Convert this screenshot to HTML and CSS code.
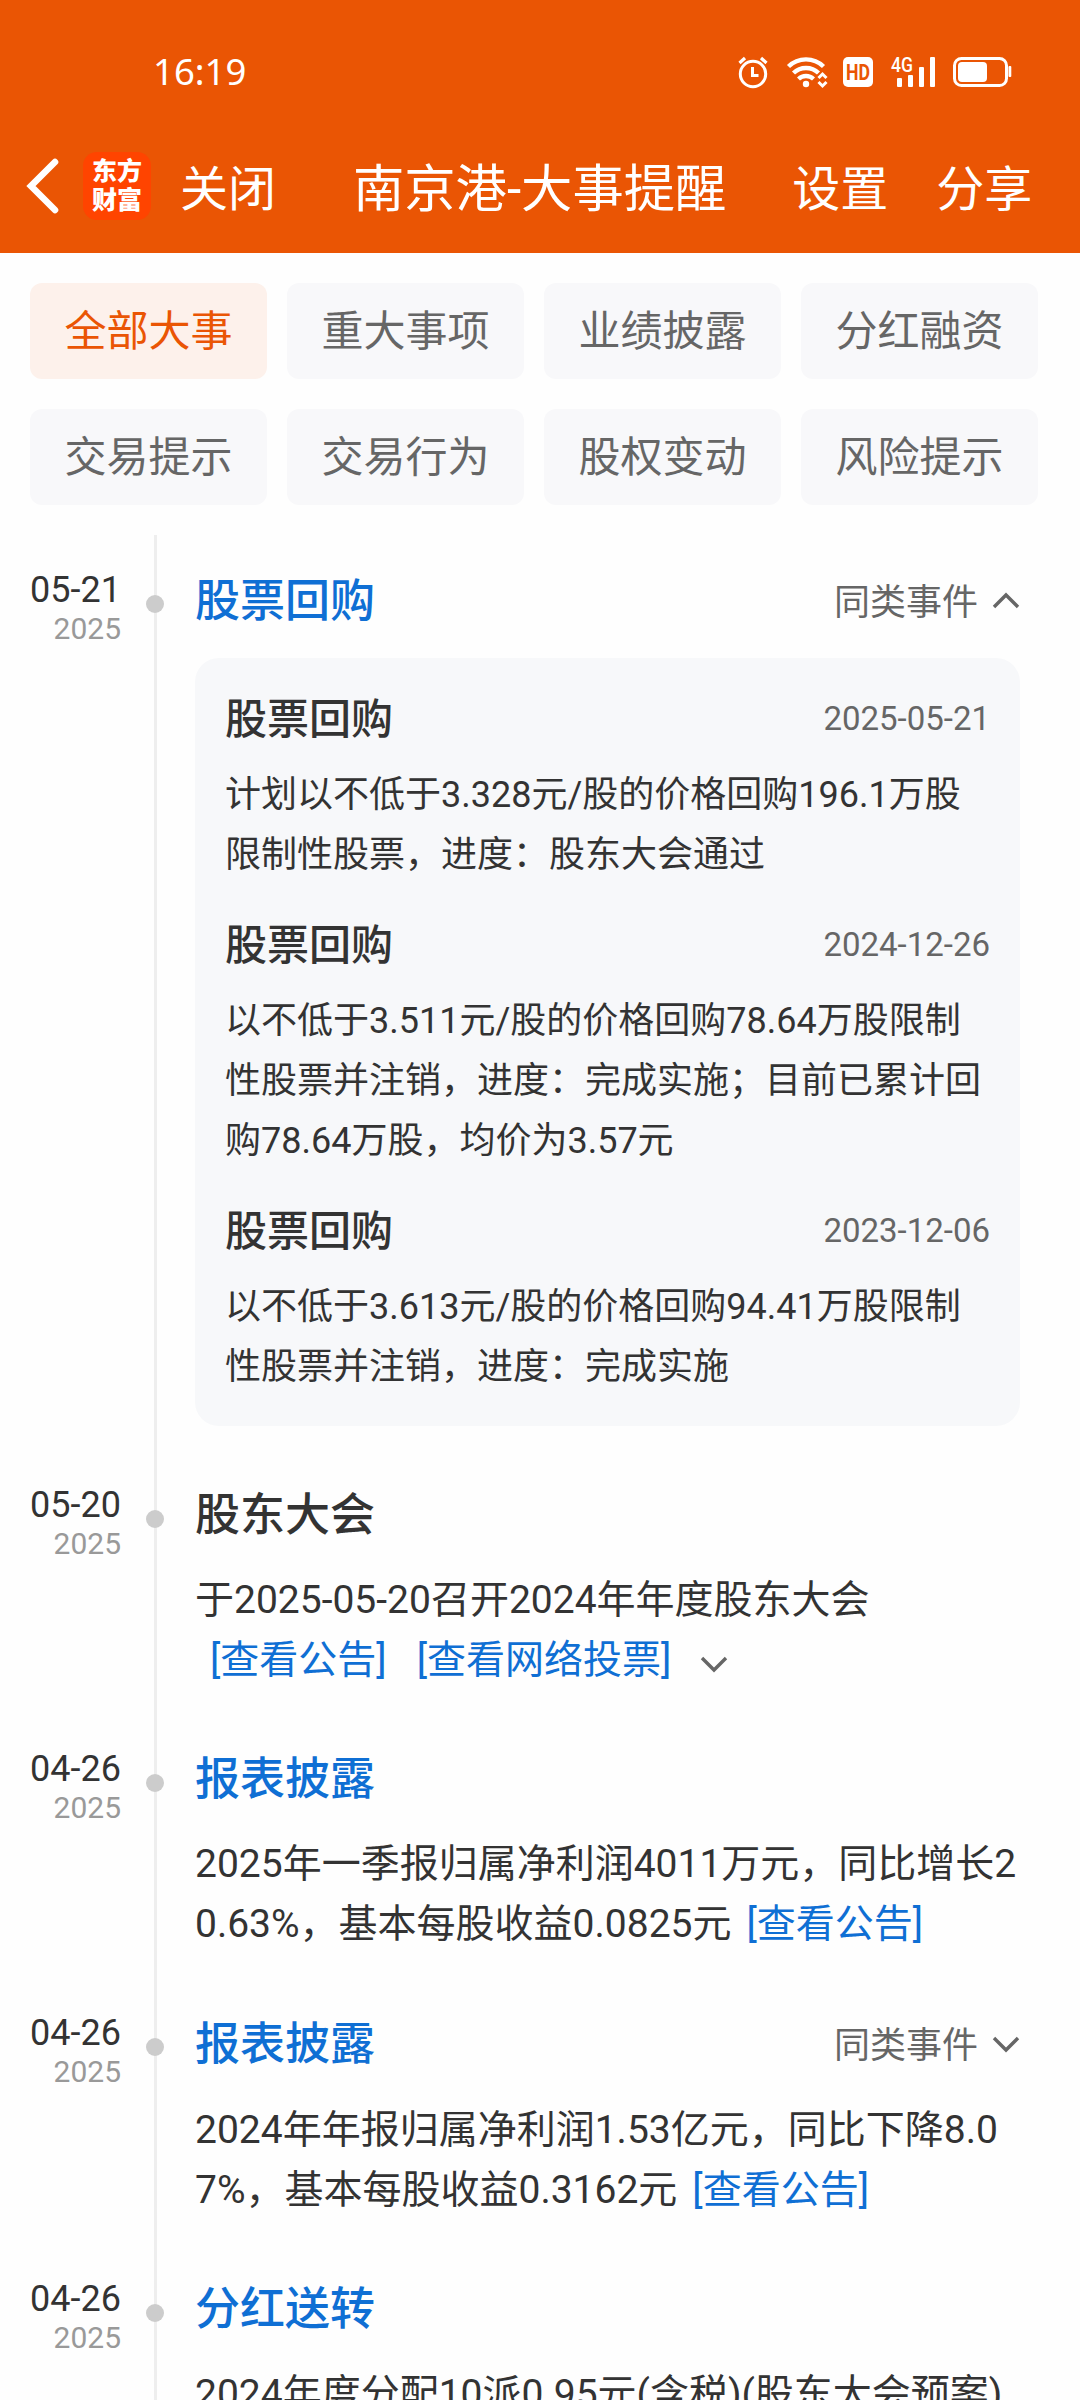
FILE: index.html
```html
<!DOCTYPE html>
<html lang="zh-CN">
<head>
    <meta charset="UTF-8">
    <meta name="viewport" content="width=device-width, initial-scale=1.0">
    <title>南京港-大事提醒</title>
    <link rel="stylesheet" href="styles.css">
</head>
<body>

    <header class="header">
        <div class="status-bar">
            <span class="time">16:19</span>
            <svg class="status-icons" width="280" height="40" viewBox="735 52 280 40" fill="none" stroke="#fff">
                <!-- 闹钟 -->
                <circle cx="753" cy="74" r="12.7" stroke-width="3"/>
                <path d="M752.5 67v8.5h6" stroke-width="3"/>
                <path d="M739.5 63l5.500-5M766.500 63l-5.500-5" stroke-width="3.2"/>
                <!-- WiFi -->
                <path d="M788.500 66.500a25 25 0 0 1 35 0" stroke-width="4.4"/>
                <path d="M793.500 73a18 18 0 0 1 25 0" stroke-width="4.4"/>
                <path d="M798.500 79a11 11 0 0 1 15 0" stroke-width="4.4"/>
                <circle cx="806" cy="84" r="3.2" fill="#fff" stroke="none"/>
                <path d="M818.500 78l4-4 4 4M818.500 82l4 4 4-4" stroke-width="3"/>
                <!-- HD -->
                <rect x="843" y="57" width="30" height="30" rx="5" fill="#fff" stroke="none"/>
                <text class="hd" x="846" y="80" textLength="24" lengthAdjust="spacingAndGlyphs">HD</text>
                <!-- 信号 -->
                <text class="net" x="891" y="72" textLength="22" lengthAdjust="spacingAndGlyphs">4G</text>
                <g fill="#fff" stroke="none">
                    <rect x="897" y="78" width="5" height="9" rx="1"/>
                    <rect x="908" y="75" width="5" height="12" rx="1"/>
                    <rect x="919" y="67" width="5" height="20" rx="1"/>
                    <rect x="930" y="57" width="5" height="30" rx="1"/>
                </g>
                <!-- 电池 -->
                <rect x="954.500" y="58.500" width="52" height="27" rx="7" stroke-width="3"/>
                <rect x="958" y="62" width="29" height="20" rx="4" fill="#fff" stroke="none"/>
                <rect x="1008.500" y="66" width="2.800" height="11" rx="1" fill="#fff" stroke="none"/>
            </svg>
        </div>
        <nav class="nav">
            <svg class="back" width="34" height="60" viewBox="0 0 34 60">
                <path d="M29 6L5 30l24 24" fill="none" stroke="#fff" stroke-width="6.6" stroke-linecap="round"/>
            </svg>
            <div class="logo"><span>东方</span><span>财富</span></div>
            <a class="nav-btn close">关闭</a>
            <h1>南京港-大事提醒</h1>
            <a class="nav-btn setting">设置</a>
            <a class="nav-btn">分享</a>
        </nav>
    </header>

    <div class="tabs">
        <div class="tab active">全部大事</div>
        <div class="tab">重大事项</div>
        <div class="tab">业绩披露</div>
        <div class="tab">分红融资</div>
        <div class="tab">交易提示</div>
        <div class="tab">交易行为</div>
        <div class="tab">股权变动</div>
        <div class="tab">风险提示</div>
    </div>

    <main class="timeline">
        <section class="event">
            <div class="date">
                <div class="day">05-21</div>
                <div class="year">2025</div>
            </div>
            <div class="axis"><i class="dot"></i></div>
            <div class="content">
                <div class="title-row has-same">
                    <h2 class="blue">股票回购</h2>
                    <span class="same">同类事件
                        <svg class="arrow" width="28" height="18" viewBox="0 0 28 18"><path d="M2 15L14 3l12 12"/></svg>
                    </span>
                </div>
                <div class="card">
                    <div class="item">
                        <div class="item-head"><h3>股票回购</h3><span>2025-05-21</span></div>
                        <p>计划以不低于3.328元/股的价格回购196.1万股限制性股票，进度：股东大会通过</p>
                    </div>
                    <div class="item">
                        <div class="item-head"><h3>股票回购</h3><span>2024-12-26</span></div>
                        <p>以不低于3.511元/股的价格回购78.64万股限制性股票并注销，进度：完成实施；目前已累计回购78.64万股，均价为3.57元</p>
                    </div>
                    <div class="item">
                        <div class="item-head"><h3>股票回购</h3><span>2023-12-06</span></div>
                        <p>以不低于3.613元/股的价格回购94.41万股限制性股票并注销，进度：完成实施</p>
                    </div>
                </div>
            </div>
        </section>

        <section class="event">
            <div class="date">
                <div class="day">05-20</div>
                <div class="year">2025</div>
            </div>
            <div class="axis"><i class="dot"></i></div>
            <div class="content">
                <div class="title-row"><h2>股东大会</h2></div>
                <p class="text">于2025-05-20召开2024年年度股东大会<br><a>[查看公告]</a><a>[查看网络投票]</a><svg class="arrow more" width="28" height="18" viewBox="0 0 28 18"><path d="M2 3l12 12L26 3"/></svg></p>
            </div>
        </section>

        <section class="event">
            <div class="date">
                <div class="day">04-26</div>
                <div class="year">2025</div>
            </div>
            <div class="axis"><i class="dot"></i></div>
            <div class="content">
                <div class="title-row"><h2 class="blue">报表披露</h2></div>
                <p class="text">2025年一季报归属净利润4011万元，同比增长20.63%，基本每股收益0.0825元<a>[查看公告]</a></p>
            </div>
        </section>

        <section class="event">
            <div class="date">
                <div class="day">04-26</div>
                <div class="year">2025</div>
            </div>
            <div class="axis"><i class="dot"></i></div>
            <div class="content">
                <div class="title-row has-same">
                    <h2 class="blue">报表披露</h2>
                    <span class="same">同类事件
                        <svg class="arrow" width="28" height="18" viewBox="0 0 28 18"><path d="M2 3l12 12L26 3"/></svg>
                    </span>
                </div>
                <p class="text">2024年年报归属净利润1.53亿元，同比下降8.07%，基本每股收益0.3162元<a>[查看公告]</a></p>
            </div>
        </section>

        <section class="event">
            <div class="date">
                <div class="day">04-26</div>
                <div class="year">2025</div>
            </div>
            <div class="axis"><i class="dot"></i></div>
            <div class="content">
                <div class="title-row"><h2 class="blue">分红送转</h2></div>
                <p class="text">2024年度分配10派0.95元(含税)(股东大会预案)</p>
            </div>
        </section>
    </main>

</body>
</html>
```

FILE: styles.css
```css
* {
    box-sizing: border-box;
    margin: 0;
    padding: 0;
}

body {
    font-family: Roboto, "Noto Sans CJK SC", sans-serif;
    color: #333;
    background-color: #fefefe;
    width: 1080px;
    height: 2400px;
    overflow: hidden;
}

h1, h2, h3 {
    font-weight: 400;
}

/* 顶部 */
.header {
    height: 253px;
    background-color: #ea5504;
    color: #fff;
}

.status-bar {
    display: flex;
    justify-content: space-between;
    align-items: center;
    height: 144px;
    padding: 0 65px 0 153px;
}

.time {
    margin-bottom: 3px;
    font-family: "Noto Sans", sans-serif;
    font-size: 36.5px;
}

.hd {
    font: bold 22px Roboto, sans-serif;
    fill: #ea5504;
    stroke: none;
}

.net {
    font: 500 20px Roboto, sans-serif;
    fill: #fff;
    stroke: none;
}

.nav {
    display: flex;
    align-items: center;
    height: 84px;
    padding-left: 26px;
}

.logo {
    display: flex;
    flex-direction: column;
    justify-content: center;
    width: 68px;
    height: 68px;
    margin-left: 23px;
    border-radius: 14px;
    background-color: #ff4400;
    text-align: center;
    font-size: 25px;
    font-weight: 900;
    line-height: 29px;
}

.nav-btn {
    margin-bottom: 3px;
    font-size: 48px;
}

.close {
    margin-left: 29px;
}

.nav h1 {
    margin: 0 0 3px 77px;
    font-size: 51.3px;
    white-space: nowrap;
}

.setting {
    margin: 0 48px 3px 66px;
}

/* 分类 */
.tabs {
    display: grid;
    grid-template-columns: repeat(4, 237px);
    gap: 30px 20px;
    padding: 30px 30px 0;
}

.tab {
    height: 96px;
    line-height: 97px;
    border-radius: 12px;
    background-color: #f8f8fa;
    color: #666;
    font-size: 42px;
    text-align: center;
}

.tab.active {
    background-color: #fdf1eb;
    color: #ea5504;
}

/* 时间轴 */
.timeline {
    margin-top: 30px;
}

.event {
    display: flex;
}

.date {
    width: 121px;
    padding-top: 33px;
    text-align: right;
}

.day {
    font-size: 36px;
    line-height: 44px;
}

.year {
    color: #999;
    font-size: 30px;
    line-height: 34px;
}

.axis {
    width: 3px;
    margin-left: 33px;
    background-color: #eee;
}

.dot {
    display: block;
    width: 18px;
    height: 18px;
    margin: 60px 0 0 -8px;
    border-radius: 50%;
    background-color: #ccc;
}

.content {
    width: 825px;
    margin-left: 38px;
    padding: 30px 0 24px;
}

.title-row {
    display: flex;
    justify-content: space-between;
    align-items: center;
    height: 70px;
}

.title-row.has-same {
    height: 72px;
}

.title-row h2 {
    margin-bottom: 7px;
    font-size: 45px;
    font-weight: 500;
}

.title-row .blue {
    color: #0f6fd4;
}

.same {
    display: flex;
    align-items: center;
    gap: 14px;
    margin-bottom: 5px;
    color: #666;
    font-size: 36px;
}

.arrow {
    fill: none;
    stroke: #666;
    stroke-width: 3.4;
}

.same .arrow {
    margin-top: 4px;
}

.text {
    padding-top: 20px;
    font-size: 39px;
    line-height: 60px;
    word-break: break-all;
}

.text a {
    padding: 0 15px;
    color: #0f6fd4;
}

.more {
    margin-left: 14px;
}

/* 同类事件列表 */
.card {
    margin-top: 21px;
    padding: 30px 30px 29px;
    border-radius: 24px;
    background-color: #f7f8fa;
}

.item + .item {
    margin-top: 29px;
}

.item-head {
    display: flex;
    justify-content: space-between;
    align-items: center;
    height: 60px;
    margin-bottom: 17px;
}

.item-head h3 {
    margin-bottom: 5px;
    font-size: 42px;
    font-weight: 500;
}

.item-head span {
    color: #666;
    font-size: 33px;
}

.item p {
    font-size: 36px;
    line-height: 60px;
    word-break: break-all;
}
```
